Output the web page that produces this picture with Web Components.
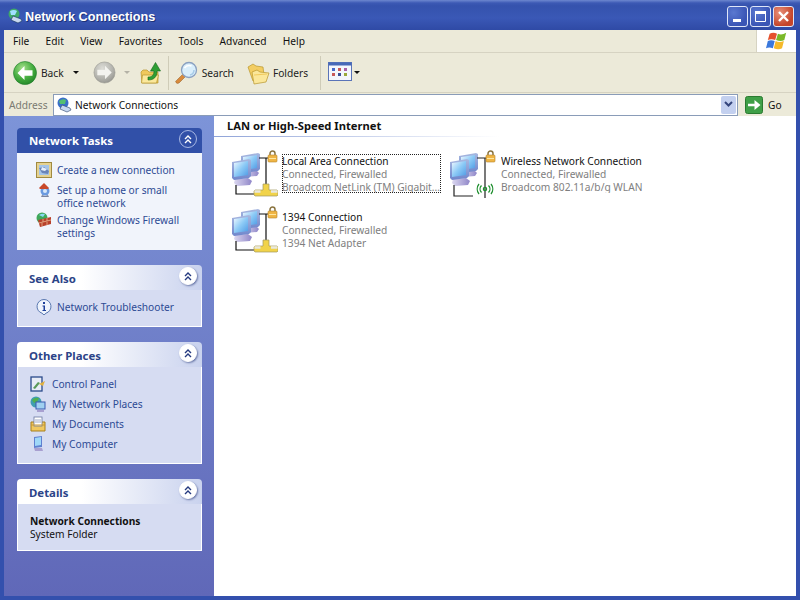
<!DOCTYPE html>
<html>
<head>
<meta charset="utf-8">
<title>Network Connections</title>
<style>
  html, body { margin: 0; height: 100%; overflow: hidden; }
  body { font: 10.2px "Noto Sans", "Liberation Sans", sans-serif; }
</style>
</head>
<body>
<xp-window>
  <xp-titlebar slot="top">Network Connections</xp-titlebar>
  <xp-menubar slot="top"></xp-menubar>
  <xp-toolbar slot="top"></xp-toolbar>
  <xp-address slot="top">Network Connections</xp-address>

  <xp-sidebar slot="side">
    <task-pane heading="Network Tasks" primary>
      <task-link icon="newconn" indent>Create a new connection</task-link>
      <task-link icon="home" indent>Set up a home or small office network</task-link>
      <task-link icon="firewall" indent>Change Windows Firewall settings</task-link>
    </task-pane>
    <task-pane heading="See Also">
      <task-link icon="info" indent>Network Troubleshooter</task-link>
    </task-pane>
    <task-pane heading="Other Places">
      <task-link icon="panel">Control Panel</task-link>
      <task-link icon="places">My Network Places</task-link>
      <task-link icon="docs">My Documents</task-link>
      <task-link icon="computer">My Computer</task-link>
    </task-pane>
    <task-pane heading="Details" details>
      <b>Network Connections</b><br>System Folder
    </task-pane>
  </xp-sidebar>

  <conn-group heading="LAN or High-Speed Internet">
    <conn-tile focused name="Local Area Connection" status="Connected, Firewalled" device="Broadcom NetLink (TM) Gigabit..."></conn-tile>
    <conn-tile wireless name="Wireless Network Connection" status="Connected, Firewalled" device="Broadcom 802.11a/b/g WLAN"></conn-tile>
    <conn-tile name="1394 Connection" status="Connected, Firewalled" device="1394 Net Adapter"></conn-tile>
  </conn-group>
</xp-window>

<script>
// all the small pictures, drawn on their own viewBox
const monitors = `
  <defs>
    <linearGradient id="scr" x1="0" y1="0" x2="1" y2="1"><stop offset="0" stop-color="#eef8ff"/><stop offset=".5" stop-color="#8ccaf6"/><stop offset="1" stop-color="#4f9ae4"/></linearGradient>
    <linearGradient id="bez" x1="0" y1="0" x2="0" y2="1"><stop offset="0" stop-color="#a8b8e0"/><stop offset="1" stop-color="#6f86cc"/></linearGradient>
    <linearGradient id="stand" x1="0" y1="0" x2="1" y2="0"><stop offset="0" stop-color="#dcd8f0"/><stop offset="1" stop-color="#8f86c8"/></linearGradient>
  </defs>
  <g transform="translate(-2)">
    <path d="M16 21l12-1 3 3-2 3-12 1z" fill="url(#stand)"/>
    <path d="M13 6l17-3 2 1v15l-2 2-15 2-2-2z" fill="url(#bez)"/>
    <path d="M15 7l14-2v13l-14 2z" fill="url(#scr)"/>
  </g>
  <path d="M5 29l13-1 4 3-2 4-13 1-3-3z" fill="url(#stand)"/>
  <path d="M2 12l17-3 2 1v16l-2 2-15 2-2-2z" fill="url(#bez)"/>
  <path d="M4 13l14-2v14L4 27z" fill="url(#scr)"/>`;
const lock = `
  <path d="M40 5V3.500a2.500 2.500 0 0 1 5 0V5" fill="none" stroke="#8a7440" stroke-width="1.500"/>
  <rect x="38" y="5" width="9" height="7" rx="1" fill="#efb545" stroke="#b58428" stroke-width=".6"/>
  <path d="M39 8.500h7" stroke="#ffe7a0" stroke-width="1"/>`;
const icons = {
  lan: [48, `${monitors}
    <path d="M29 8h9M36 8v26M6 35v9h18" fill="none" stroke="#111" stroke-width="1.200"/>
    ${lock}
    <path d="M33 34h6v6h8l1 1v4l-1 1H25l-1-1v-4l1-1h8z" fill="#f1d34a" stroke="#a09a60" stroke-width=".7"/>
    <path d="M24.500 41.500h6M41 41.500h6.500" stroke="#e8e8e0" stroke-width="2.500"/>`],
  wifi: [48, `${monitors}
    <path d="M29 8h9M37 8v40M6 35v11h19" fill="none" stroke="#222" stroke-width="1.200"/>
    ${lock}
    <g fill="none" stroke="#1f8f2f" stroke-width="1.300">
      <path d="M33.500 35.500a5 5 0 0 0 0 7M31 34a8 8 0 0 0 0 10M40.500 35.500a5 5 0 0 1 0 7M43 34a8 8 0 0 1 0 10"/>
      <circle cx="37" cy="39" r="1.600"/>
    </g>`],
  title: [16, `<circle cx="7" cy="6" r="5.500" fill="#3fa86a"/><path d="M3 3q4-2 7 0l-2 4-4 0z" fill="#a0e0ff"/>
    <path d="M6 8l8 3 1 2-4 2-7-3z" fill="#c8d8f0" stroke="#10305a" stroke-width=".6"/>`],
  addr: [16, `<circle cx="7" cy="6" r="5.500" fill="#3a6fc8"/><path d="M3 4q4-3 7-1l-1 4-5 0z" fill="#54c070"/>
    <path d="M6 8l8 3 1 2-4 2-7-3z" fill="#c8d8f0" stroke="#27406a" stroke-width=".6"/>`],
  back: [24, `<defs><radialGradient id="b" cx=".4" cy=".3" r=".8"><stop offset="0" stop-color="#a4e08a"/><stop offset=".55" stop-color="#45ad3f"/><stop offset="1" stop-color="#1d7f24"/></radialGradient></defs>
    <circle cx="12" cy="12" r="11.500" fill="url(#b)" stroke="#1f7a2a" stroke-width=".6"/>
    <path d="M4.500 12l7-7v4.200h8v5.600h-8V19z" fill="#fff"/>`],
  forward: [24, `<defs><radialGradient id="f" cx=".4" cy=".3" r=".8"><stop offset="0" stop-color="#dcdcd6"/><stop offset=".6" stop-color="#b4b4ae"/><stop offset="1" stop-color="#8e8e88"/></radialGradient></defs>
    <circle cx="12" cy="12" r="11" fill="url(#f)" stroke="#96968f" stroke-width=".6"/>
    <path d="M19.500 12l-7-7v4.200h-8v5.600h8V19z" fill="#f4f4f0"/>`],
  up: [22, `<path d="M1 10l2-2h4l2 2h9v11H2z" fill="#f0c95c" stroke="#b8962e" stroke-width=".7"/>
    <path d="M2.500 13h16l-2 8H1.500z" fill="#fbe89c" stroke="#b8962e" stroke-width=".7"/>
    <path d="M8 15c4 0 6-2 6-6h-3.500l5-8.500 5 8.500H17c0 6-3 9-9 9z" fill="#2e9e35" stroke="#14661a" stroke-width=".6"/>`],
  search: [24, `<path d="M2.500 19.500l6-6 2.500 2.500-6 6q-2 1-3-.5t.5-2z" fill="#d98a3c" stroke="#8f5a22" stroke-width=".5"/>
    <circle cx="15" cy="9" r="7.500" fill="#d9eefb" stroke="#8aa0c0" stroke-width="1.300"/>
    <path d="M10.500 7q2.500-3.500 7-2" fill="none" stroke="#fff" stroke-width="1.600"/>
    <path d="M20 9q0 4-4 5" fill="none" stroke="#a8cce8" stroke-width="1.500"/>`],
  folders: [24, `<path d="M1 6l5-3 3 2 7 1 1 8-11 6z" fill="#f3cd62" stroke="#b8962e" stroke-width=".7"/>
    <path d="M5 11l5-2 3 2 9 1-3 9-12 2z" fill="#fbe79a" stroke="#b8962e" stroke-width=".7"/>
    <path d="M7 14l13-1" stroke="#f0c95c"/>`],
  views: [24, `<rect x=".5" y="1.500" width="23" height="18" fill="#f4f6fc" stroke="#5a74b8"/><rect x=".5" y="1.500" width="23" height="3" fill="#4668b8"/>
    <g><rect x="4" y="7" width="3" height="3" fill="#4668c8"/><rect x="10" y="7" width="3" height="3" fill="#c85858"/><rect x="16" y="7" width="3" height="3" fill="#a860a8"/></g>
    <g><rect x="4" y="12" width="3" height="3" fill="#c85858"/><rect x="10" y="12" width="3" height="3" fill="#3a4f98"/><rect x="16" y="12" width="3" height="3" fill="#9aa83a"/></g>`],
  go: [18, `<rect x=".5" y=".5" width="17" height="17" rx="2" fill="#3f9f47" stroke="#2a7a30"/><path d="M3 7.700h6.500V4L15.500 9l-6 5v-3.700H3z" fill="#fff"/>`],
  flag: [24, `<path d="M4 4q4-2 8 0l-2 7q-4-2-8 0z" fill="#e5512d"/><path d="M13 4q4 2 9-1l-2 8q-4 2-9 0z" fill="#7ab929"/>
    <path d="M2 12q3.500-1.500 7.500 0l-2 8q-4-2-7.500 0z" fill="#3a78dc"/><path d="M10.500 12q4 2 9 0l-2 8q-4 2-9 0z" fill="#f5b92a"/>`],
  newconn: [16, `<rect x=".5" y=".5" width="15" height="15" fill="#e6d290" stroke="#a08a40"/><rect x="3" y="3" width="10" height="10" fill="#a4c4e8"/><path d="M3 6l5-1 5 4-1 3-6-1z" fill="#6a84b8"/><path d="M6 5l5 2-2 2-4-1z" fill="#e8f0fa"/>`],
  home: [16, `<circle cx="9" cy="9" r="4.500" fill="#6a9ae0"/><circle cx="9" cy="9" r="2" fill="#d8e8f8"/><path d="M3 6l5-5 5 5-1 1H4z" fill="#c8482a"/><path d="M6 13l3 1 3-1 1 2H5z" fill="#7a84a0"/>`],
  firewall: [16, `<circle cx="6" cy="6" r="5.500" fill="#3fa85a"/><path d="M3 3q3-2 6-1l-2 3z" fill="#8ad8f0"/><path d="M2 8l13-3v7L4 15z" fill="#b8402a"/><path d="M3 11l12-3M7 7v3M11 6v3M6 11v3M11 10v3" stroke="#f0c8a0" stroke-width=".7"/>`],
  info: [16, `<path d="M8 .5a7 7 0 0 1 2 13.700L8 16l-2-1.800A7 7 0 0 1 8 .5z" fill="#eef3fc" stroke="#5a78b0"/><path d="M7 3h2v2H7zM6.500 6.500h2.500V11h1v1H6.500v-1h1V7.500h-1z" fill="#1d3f9a"/>`],
  panel: [16, `<rect x="1" y="1" width="11" height="14" fill="#e8ecf6" stroke="#2a4a8a" stroke-width="1.300"/><path d="M3 12l5-6 2 1-5 6z" fill="#5a9a5a"/><path d="M9 8l6-3-2 5z" fill="#e0b040"/>`],
  places: [16, `<circle cx="6" cy="6" r="5.500" fill="#3f9fb0"/><path d="M2 4q3-3 7-2l-2 4-3 1z" fill="#50b050"/><rect x="6" y="6" width="9" height="7" fill="#9fd0f0" stroke="#3a5ab0"/><path d="M7 14h7v2H7z" fill="#a8a0d0"/>`],
  docs: [16, `<path d="M1 6h14v9H1z" fill="#f0c860" stroke="#a8801c"/><rect x="4" y="1" width="8" height="9" fill="#fff" stroke="#6a78a0" stroke-width=".8"/><path d="M5 4h6M5 6h6" stroke="#7a88b0" stroke-width=".7"/><path d="M1 9h14" stroke="#c89830"/>`],
  computer: [16, `<path d="M4 1l8-1v11l-8 1z" fill="#5f80d0"/><path d="M5 2l6-1v8l-6 1z" fill="#9fd8f8"/><path d="M4 12h8l1 3H5z" fill="#a8a0d0"/>`]
};

class XpIcon extends HTMLElement {
  constructor() {
    super();
    this.attachShadow({ mode: 'open' });
  }
  connectedCallback() {
    const [box, art] = icons[this.getAttribute('name')];
    const size = this.getAttribute('size') || box;
    this.shadowRoot.innerHTML = `
      <style>:host { display: inline-flex; flex: none; } svg { display: block; }</style>
      <svg width="${size}" height="${size}" viewBox="0 0 ${box} ${box}">${art}</svg>`;
  }
}
customElements.define('xp-icon', XpIcon);

class XpWindow extends HTMLElement {
  constructor() {
    super();
    this.attachShadow({ mode: 'open' });
    this.shadowRoot.innerHTML = `
      <style>
        :host {
          display: flex;
          flex-direction: column;
          width: 800px;
          height: 600px;
          box-sizing: border-box;
          background: #3350ad;
          padding-bottom: 4px;
        }
        .main { flex: 1; display: flex; margin: 0 4px; min-height: 0; }
        .view { flex: 1; background: #fff; padding-top: 5px; }
      </style>
      <slot name="top"></slot>
      <div class="main">
        <slot name="side"></slot>
        <div class="view"><slot></slot></div>
      </div>`;
  }
}
customElements.define('xp-window', XpWindow);

class XpTitlebar extends HTMLElement {
  constructor() {
    super();
    this.attachShadow({ mode: 'open' });
    this.shadowRoot.innerHTML = `
      <style>
        :host {
          display: flex;
          align-items: center;
          height: 30px;
          box-sizing: border-box;
          padding: 2px 6px 0 7px;
          background: linear-gradient(#6d87cf 0, #3c59b4 3px, #3552ad 6px, #3a58b6 18px, #2f4aa5 30px);
          color: #fff;
          font: bold 12.700px "Liberation Sans", sans-serif;
          text-shadow: 1px 1px 0 #1d3278;
        }
        .name { flex: 1; margin: 2px 0 0 2px; }
        .btn {
          width: 19px;
          height: 19px;
          margin-left: 2px;
          border: 1px solid #dfe6f8;
          border-radius: 3px;
          background: radial-gradient(circle at 30% 30%, #5a78d0, #3a55b5 70%);
        }
        .btn svg { display: block; }
        .close { background: radial-gradient(circle at 30% 30%, #e8907a, #c5452a 70%); }
      </style>
      <xp-icon name="title" size="16"></xp-icon>
      <span class="name"><slot></slot></span>
      <div class="btn"><svg width="19" height="19"><rect x="5" y="12" width="8" height="3" fill="#fff"/></svg></div>
      <div class="btn"><svg width="19" height="19"><path d="M4.500 5.500h10v9h-10z" fill="none" stroke="#fff"/><rect x="4" y="4" width="11" height="3" fill="#fff"/></svg></div>
      <div class="btn close"><svg width="19" height="19"><path d="M5 5l9 9M14 5l-9 9" stroke="#fff" stroke-width="2.400"/></svg></div>`;
  }
}
customElements.define('xp-titlebar', XpTitlebar);

class XpMenubar extends HTMLElement {
  constructor() {
    super();
    this.attachShadow({ mode: 'open' });
    const items = ['File', 'Edit', 'View', 'Favorites', 'Tools', 'Advanced', 'Help'];
    this.shadowRoot.innerHTML = `
      <style>
        :host {
          display: flex;
          align-items: stretch;
          height: 23px;
          margin: 0 4px;
          box-sizing: border-box;
          background: #ecead9;
          border-bottom: 1px solid #d6d3c2;
          color: #111;
        }
        .items { flex: 1; display: flex; gap: 16.300px; align-items: center; padding: 0 0 1px 9px; }
        .logo { width: 39px; background: #fff; display: flex; align-items: center; justify-content: center; border-left: 1px solid #d6d3c2; }
      </style>
      <div class="items">${items.map(i => `<span>${i}</span>`).join('')}</div>
      <div class="logo"><xp-icon name="flag" size="22"></xp-icon></div>`;
  }
}
customElements.define('xp-menubar', XpMenubar);

class XpToolbar extends HTMLElement {
  constructor() {
    super();
    this.attachShadow({ mode: 'open' });
    this.shadowRoot.innerHTML = `
      <style>
        :host {
          display: flex;
          align-items: center;
          height: 40px;
          margin: 0 4px;
          padding-left: 9px;
          box-sizing: border-box;
          background: #ecead9;
          border-bottom: 1px solid #d6d3c2;
          color: #222;
        }
        span { margin-left: 4px; }
        .sep { width: 1px; height: 34px; background: #cfccb8; }
        .arrow { width: 0; height: 0; border: 3px solid transparent; border-top: 3px solid #111; border-bottom: 0; }
        .arrow.off { border-top-color: #b4b2a6; }
      </style>
      <xp-icon name="back" size="24"></xp-icon>
      <span>Back</span>
      <i class="arrow" style="margin:0 14px 0 9px"></i>
      <xp-icon name="forward" size="23"></xp-icon>
      <i class="arrow off" style="margin:0 10px 0 8px"></i>
      <xp-icon name="up" size="22"></xp-icon>
      <i class="sep" style="margin:0 5px 0 6px"></i>
      <xp-icon name="search" size="24"></xp-icon>
      <span>Search</span>
      <xp-icon name="folders" size="24" style="margin-left:13px"></xp-icon>
      <span style="margin-left:2px">Folders</span>
      <i class="sep" style="margin:0 7px 0 12px"></i>
      <xp-icon name="views" size="24"></xp-icon>
      <i class="arrow" style="margin-left:2px"></i>`;
  }
}
customElements.define('xp-toolbar', XpToolbar);

class XpAddress extends HTMLElement {
  constructor() {
    super();
    this.attachShadow({ mode: 'open' });
    this.shadowRoot.innerHTML = `
      <style>
        :host {
          display: flex;
          align-items: center;
          height: 23px;
          margin: 0 4px;
          box-sizing: border-box;
          padding-left: 5px;
          background: #ecead9;
          color: #111;
        }
        .label { color: #7a7a72; width: 44px; }
        .field {
          flex: 1;
          height: 22px;
          box-sizing: border-box;
          display: flex;
          align-items: center;
          gap: 3px;
          padding: 0 1px 0 2px;
          background: #fff;
          border: 1px solid #8a9cb8;
        }
        .text { flex: 1; }
        .drop {
          width: 15px;
          height: 18px;
          display: flex;
          align-items: center;
          justify-content: center;
          background: #c3d0ef;
          border-radius: 2px;
        }
        .go { display: flex; align-items: center; gap: 5px; width: 58px; padding-left: 7px; box-sizing: border-box; }
      </style>
      <span class="label">Address</span>
      <div class="field">
        <xp-icon name="addr" size="16"></xp-icon>
        <span class="text"><slot></slot></span>
        <div class="drop"><svg width="9" height="7"><path d="M1 1l3.500 3.500L8 1" fill="none" stroke="#34457c" stroke-width="2"/></svg></div>
      </div>
      <div class="go"><xp-icon name="go" size="18"></xp-icon><span>Go</span></div>`;
  }
}
customElements.define('xp-address', XpAddress);

class XpSidebar extends HTMLElement {
  constructor() {
    super();
    this.attachShadow({ mode: 'open' });
    this.shadowRoot.innerHTML = `
      <style>
        :host {
          display: flex;
          flex-direction: column;
          gap: 15px;
          width: 210px;
          box-sizing: border-box;
          padding: 12px 12px 0 13px;
          background: linear-gradient(#7d94d8, #6068b8);
        }
      </style>
      <slot></slot>`;
  }
}
customElements.define('xp-sidebar', XpSidebar);

class TaskPane extends HTMLElement {
  constructor() {
    super();
    this.attachShadow({ mode: 'open' });
    const primary = this.hasAttribute('primary');
    const details = this.hasAttribute('details');
    const chevron = primary ? '#fff' : '#24397f';
    this.shadowRoot.innerHTML = `
      <style>
        :host { display: block; }
        .head {
          display: flex;
          align-items: center;
          justify-content: space-between;
          height: 25px;
          padding: 0 5px 0 12px;
          border-radius: 4px 4px 0 0;
          font: bold 11.400px "Noto Sans", "Liberation Sans", sans-serif;
          color: ${primary ? '#fff' : '#2c4488'};
          background: ${primary ? '#3150a8' : 'linear-gradient(90deg, #fff 35%, #c9d2ee)'};
        }
        .head span { margin-top: ${primary ? 0 : 2}px; }
        .chev {
          width: 16px;
          height: 16px;
          margin-top: -4px;
          border-radius: 50%;
          background: ${primary ? 'transparent' : '#fff'};
          border: 1px solid ${primary ? '#a8b8e4' : '#fff'};
          box-shadow: ${primary ? 'none' : '1px 1px 2px #6a78a8'};
        }
        .chev svg { display: block; }
        .body {
          display: ${details ? 'block' : 'flex'};
          flex-direction: column;
          gap: 4px;
          padding: ${details ? '11px 5px 9px 12px' : '10px 5px 10px 12px'};
          background: ${primary ? '#f1f4fb' : '#d6dcf2'};
          border: 1px solid ${primary ? '#f1f4fb' : '#fff'};
          border-top: 0;
          line-height: 13px;
          color: #111;
        }
      </style>
      <div class="head">
        <span>${this.getAttribute('heading')}</span>
        <div class="chev"><svg width="16" height="16" fill="none" stroke="${chevron}" stroke-width="1.400"><path d="M5 8l3-3 3 3M5 12l3-3 3 3"/></svg></div>
      </div>
      <div class="body"><slot></slot></div>`;
  }
}
customElements.define('task-pane', TaskPane);

class TaskLink extends HTMLElement {
  constructor() {
    super();
    this.attachShadow({ mode: 'open' });
    this.shadowRoot.innerHTML = `
      <style>
        :host { display: flex; align-items: flex-start; gap: 6px; color: #2d4a94; line-height: 13px; min-height: 16px; }
        :host([indent]) { gap: 5px; margin-left: 6px; }
        xp-icon { margin-top: -1px; }
        span { margin: 1px 0 -1px; }
      </style>
      <xp-icon name="${this.getAttribute('icon')}" size="16"></xp-icon>
      <span><slot></slot></span>`;
  }
}
customElements.define('task-link', TaskLink);

class ConnGroup extends HTMLElement {
  constructor() {
    super();
    this.attachShadow({ mode: 'open' });
    this.shadowRoot.innerHTML = `
      <style>
        :host { display: block; }
        h2 {
          margin: 0;
          height: 15px;
          padding-left: 13px;
          font: bold 11.200px/10px "Noto Sans", "Liberation Sans", sans-serif;
          color: #111;
          border-bottom: 1px solid;
          border-image: linear-gradient(90deg, #8fa3d8, #fff 285px) 1;
          width: 285px;
        }
        .grid { display: grid; grid-template-columns: 218px 218px; grid-auto-rows: 56px; padding: 13px 0 0 16px; }
      </style>
      <h2>${this.getAttribute('heading')}</h2>
      <div class="grid"><slot></slot></div>`;
  }
}
customElements.define('conn-group', ConnGroup);

class ConnTile extends HTMLElement {
  constructor() {
    super();
    this.attachShadow({ mode: 'open' });
    const g = n => this.getAttribute(n);
    this.shadowRoot.innerHTML = `
      <style>
        :host { display: flex; align-items: flex-start; gap: 4px; line-height: 13px; }
        :host([wireless]) { gap: 5px; }
        .text { width: 159px; margin-top: 4px; padding-top: 1px; height: 38px; white-space: nowrap; overflow: hidden; }
        :host([focused]) .text { outline: 1px dotted #222; outline-offset: -1px; }
        .name { color: #111; }
        .sub { color: #7e7e7e; }
      </style>
      <xp-icon name="${this.hasAttribute('wireless') ? 'wifi' : 'lan'}" size="48"></xp-icon>
      <div class="text">
        <div class="name">${g('name')}</div>
        <div class="sub">${g('status')}</div>
        <div class="sub">${g('device')}</div>
      </div>`;
  }
}
customElements.define('conn-tile', ConnTile);
</script>
</body>
</html>
